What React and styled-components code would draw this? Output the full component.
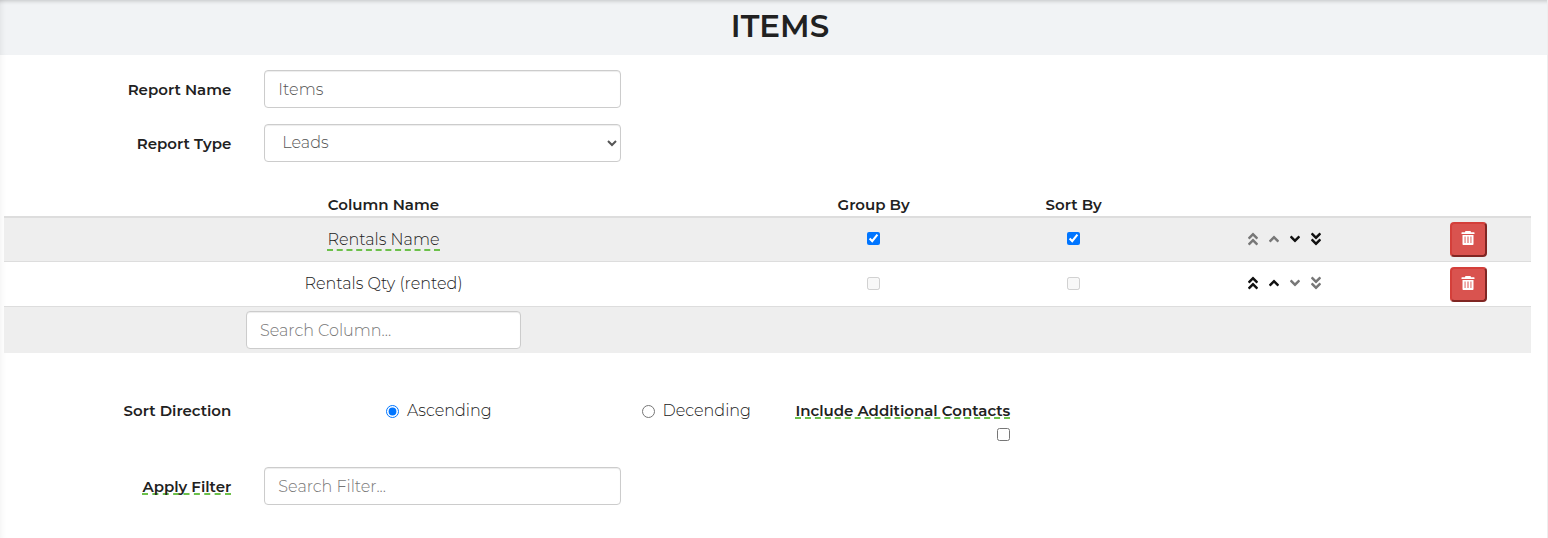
import { useState } from "react";
import styled, { createGlobalStyle } from "styled-components";
import {
  FaAngleDoubleDown,
  FaAngleDoubleUp,
  FaAngleDown,
  FaAngleUp,
} from "react-icons/fa";

const columns = [
  { name: "Rentals Name", hint: true, groupable: true },
  { name: "Rentals Qty (rented)", hint: false, groupable: false },
];

const TrashIcon = () => (
  <svg width="14" height="14" viewBox="0 0 14 14" aria-hidden="true">
    <path
      fill="currentColor"
      fillRule="evenodd"
      d="M4 1.2C4 .5 4.5 0 5.200 0h3.600C9.500 0 10 .5 10 1.200h3c.3 0 .5.200.5.500V3H.5V1.700c0-.3.200-.5.500-.5zM1.500 4h11v9c0 .6-.4 1-1 1h-9c-.6 0-1-.4-1-1zM3.600 5.500v6.500h.9V5.500zM6.500 5.500v6.500h1V5.500zM9.500 5.500v6.500h.9V5.500z"
    />
  </svg>
);

const App = () => {
  const [name, setName] = useState("Items");
  const [direction, setDirection] = useState("asc");

  return (
    <>
      <GlobalStyle />
      <StPage>
        <StHeader>
          <h1>ITEMS</h1>
        </StHeader>

        <StForm onSubmit={(e) => e.preventDefault()}>
          <StRow>
            <StLabel htmlFor="reportName">Report Name</StLabel>
            <StField>
              <StInput
                id="reportName"
                value={name}
                onChange={(e) => setName(e.target.value)}
              />
            </StField>
          </StRow>
          <StRow>
            <StLabel htmlFor="reportType">Report Type</StLabel>
            <StField>
              <StSelect id="reportType" defaultValue="leads">
                <option value="leads">Leads</option>
              </StSelect>
            </StField>
          </StRow>

          <StTable>
            <colgroup>
              <col className="name" />
              <col className="group" />
              <col className="sort" />
              <col className="move" />
              <col className="remove" />
            </colgroup>
            <thead>
              <tr>
                <th>Column Name</th>
                <th>Group By</th>
                <th>Sort By</th>
                <th></th>
                <th></th>
              </tr>
            </thead>
            <tbody>
              {columns.map((column, index) => {
                const first = index === 0;
                const last = index === columns.length - 1;
                return (
                  <tr key={column.name}>
                    <td>
                      {column.hint ? <StHint>{column.name}</StHint> : column.name}
                    </td>
                    <td>
                      <StCheck
                        type="checkbox"
                        aria-label={`Group by ${column.name}`}
                        defaultChecked={column.groupable}
                        disabled={!column.groupable}
                      />
                    </td>
                    <td>
                      <StCheck
                        type="checkbox"
                        aria-label={`Sort by ${column.name}`}
                        defaultChecked={column.groupable}
                        disabled={!column.groupable}
                      />
                    </td>
                    <td>
                      <StMoves>
                        <StMove type="button" aria-label="Move to top" disabled={first}>
                          <FaAngleDoubleUp />
                        </StMove>
                        <StMove type="button" aria-label="Move up" disabled={first}>
                          <FaAngleUp />
                        </StMove>
                        <StMove type="button" aria-label="Move down" disabled={last}>
                          <FaAngleDown />
                        </StMove>
                        <StMove type="button" aria-label="Move to bottom" disabled={last}>
                          <FaAngleDoubleDown />
                        </StMove>
                      </StMoves>
                    </td>
                    <td>
                      <StDelete type="button" aria-label={`Delete ${column.name}`}>
                        <TrashIcon />
                      </StDelete>
                    </td>
                  </tr>
                );
              })}
              <tr>
                <td>
                  <StColumnSearch
                    aria-label="Search Column"
                    placeholder="Search Column..."
                  />
                </td>
                <td colSpan={4}></td>
              </tr>
            </tbody>
          </StTable>

          <StRow>
            <StLabel as="span">Sort Direction</StLabel>
            <StRadio>
              <input
                type="radio"
                name="direction"
                checked={direction === "asc"}
                onChange={() => setDirection("asc")}
              />
              Ascending
            </StRadio>
            <StRadio>
              <input
                type="radio"
                name="direction"
                checked={direction === "desc"}
                onChange={() => setDirection("desc")}
              />
              Decending
            </StRadio>
            <StContacts>
              <StLabelHint as="label" htmlFor="contacts">
                Include Additional Contacts
              </StLabelHint>
              <StCheck type="checkbox" id="contacts" />
            </StContacts>
          </StRow>
          <StRow>
            <StLabel htmlFor="filter">
              <StLabelHint>Apply Filter</StLabelHint>
            </StLabel>
            <StField>
              <StInput id="filter" placeholder="Search Filter..." />
            </StField>
          </StRow>
        </StForm>
      </StPage>
    </>
  );
};

export default App;

const GlobalStyle = createGlobalStyle`
  * {
    box-sizing: border-box;
  }

  body {
    margin: 0;
    background: #fff;
    color: #212121;
    font-family: Montserrat, Inter, sans-serif;
    font-size: 16px;
    font-weight: 300;
    line-height: 24px;
  }

  input,
  select,
  button {
    font: inherit;
  }
`;

const StPage = styled.div`
  min-height: 100vh;
  border-right: 1px solid #eee;
  box-shadow: inset 6px 0 6px -5px rgba(0, 0, 0, 0.06);
`;

const StHeader = styled.header`
  padding: 8px 0 11px 13px;
  background: #f1f3f5;
  box-shadow:
    inset 0 5px 4px -4px rgba(0, 0, 0, 0.2),
    inset 6px 0 6px -5px rgba(0, 0, 0, 0.08);
  text-align: center;

  h1 {
    margin: 0;
    font-size: 31px;
    font-weight: 600;
    line-height: 36px;
  }
`;

const StForm = styled.form`
  display: flex;
  flex-direction: column;
  gap: 16px;
  padding: 15px 0;
`;

const StRow = styled.div`
  display: grid;
  grid-template-columns: repeat(12, 1fr);
  margin: 0 2px 0 -11px;
`;

const StLabel = styled.label`
  grid-column: span 2;
  padding: 8px 17px 0;
  font-size: 15px;
  font-weight: 600;
  text-align: right;
`;

const StField = styled.div`
  grid-column: span 3;
  padding: 0 16px;
`;

const StInput = styled.input`
  display: block;
  width: 100%;
  height: 38px;
  padding: 6px 13px;
  border: 1px solid #ccc;
  border-radius: 4px;
  background: #fff;
  box-shadow: inset 0 1px 1px rgba(0, 0, 0, 0.075);
  color: #555;

  &::placeholder {
    color: #777;
    opacity: 1;
  }
`;

const StSelect = styled(StInput).attrs({ as: "select" })`
  padding: 4px 0 6px 13px;
`;

const StTable = styled.table`
  width: calc(100% - 20px);
  margin: 14px 16px 22px 4px;
  border-spacing: 0;
  table-layout: fixed;
  text-align: center;

  .name {
    width: 49.7%;
  }

  .group {
    width: 14.5%;
  }

  .sort {
    width: 11.7%;
  }

  .move {
    width: 15.9%;
  }

  .remove {
    width: 8.2%;
  }

  th {
    padding: 3px 0 1px;
    border-bottom: 2px solid #ddd;
    font-size: 15px;
    font-weight: 600;
    line-height: 20px;
  }

  td {
    height: 45px;
    padding: 4px;
    border-top: 1px solid #ddd;
  }

  tbody tr:first-child td {
    height: 43px;
    border-top: 0;
  }

  tbody tr:nth-child(odd) {
    background: #eee;
  }
`;

const StColumnSearch = styled(StInput)`
  width: 100%;
  max-width: 275px;
  margin: 0 auto;
`;

const StHint = styled.span`
  display: inline-block;
  border-bottom: 2px dashed #6cc04a;
  line-height: 18px;
`;

const StLabelHint = styled(StHint)`
  font-size: 15px;
  font-weight: 600;
  line-height: 12px;
`;

const StCheck = styled.input`
  width: 13px;
  height: 13px;
  margin: 0 0 3px;
  vertical-align: middle;
`;

const StMoves = styled.div`
  display: flex;
  justify-content: center;
  gap: 8px;
  margin-bottom: 2px;
`;

const StMove = styled.button`
  display: flex;
  justify-content: center;
  width: 13px;
  padding: 0;
  border: 0;
  background: none;
  color: #111;
  font-size: 16px;

  svg {
    flex-shrink: 0;
  }

  &:disabled {
    color: #777;
  }
`;

const StDelete = styled.button`
  display: inline-flex;
  align-items: center;
  justify-content: center;
  width: 37px;
  height: 35px;
  padding: 0 0 3px;
  border: 2px outset #d43f3a;
  border-radius: 4px;
  background: #d9534f;
  color: #fff;
  vertical-align: middle;
`;

const StRadio = styled.label`
  display: flex;
  grid-column: span 2;
  align-items: center;
  justify-content: flex-end;
  gap: 8px;
  height: 24px;
  margin-top: 8px;
  padding-right: 16px;

  input {
    width: 13px;
    height: 13px;
    margin: 0;
  }
`;

const StContacts = styled.div`
  display: flex;
  flex-direction: column;
  grid-column: span 2;
  align-items: flex-end;
  gap: 9px;
  padding: 14px 16px 7px 0;
  white-space: nowrap;
`;
